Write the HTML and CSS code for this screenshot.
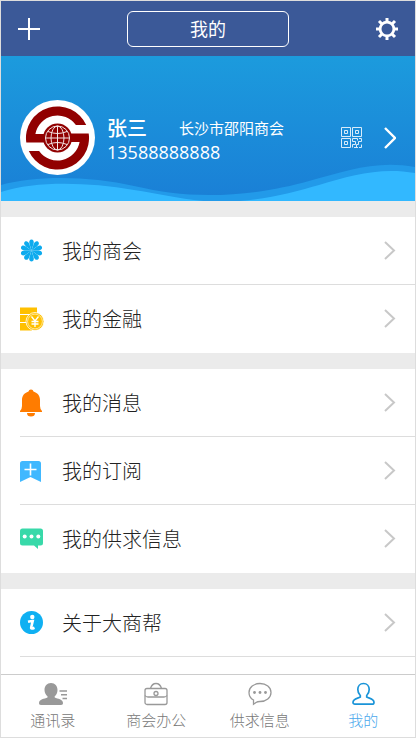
FILE: index.html
```html
<!DOCTYPE html>
<html lang="zh-CN">
	<head>
		<meta charset="utf-8">
		<meta name="viewport" content="width=device-width, initial-scale=1">
		<title>我的</title>
		<link rel="stylesheet" href="styles.css">
	</head>
	<body>
		<div class="page">
			<header class="header">
				<button type="button" class="icon-button" aria-label="添加">
					<svg width="22" height="22" viewBox="0 0 22 22"><path d="M11 0v22M0 11h22" stroke="#fff" stroke-width="2"/></svg>
				</button>
				<h1 class="title">我的</h1>
				<button type="button" class="icon-button" aria-label="设置">
					<svg width="22" height="22" viewBox="0 0 22 22" fill="none" stroke="#fff">
						<circle cx="11" cy="11" r="6.9" stroke-width="2.8"/>
						<path d="M11 0v4M11 18v4M0 11h4M18 11h4M3 3l3 3M16 16l3 3M3 19l3-3M16 6l3-3" stroke-width="3"/>
					</svg>
				</button>
			</header>

			<section class="profile">
				<svg class="wave" viewBox="0 0 414 40" preserveAspectRatio="none">
					<path fill="#229ae9" d="M0 24C35 14 90 15 133 25C160 31 180 34 208 34C245 34 280 28 308 20C345 10 375 -1 414 6V40H0z"/>
					<path fill="#32b8ff" d="M0 31C35 20 85 21 133 29C160 33 185 40 220 41C260 40 290 32 318 24C350 14 380 6 414 12V40H0z"/>
				</svg>
				<svg class="avatar" width="75" height="75" viewBox="0 0 75 75">
					<circle cx="37.5" cy="37.5" r="37.5" fill="#fff"/>
					<g fill="#910000">
						<path id="arc" d="M66.2 25A31.5 31.5 0 0 0 6.3 42.5H37V34H15.4A22.5 22.5 0 0 1 55.9 25z"/>
						<use href="#arc" transform="rotate(180 37.5 38)"/>
						<circle cx="37.5" cy="38" r="14.5"/>
					</g>
					<g fill="none" stroke="#fff" opacity=".9">
						<circle cx="37.5" cy="38" r="12"/>
						<ellipse cx="37.5" cy="38" rx="6.5" ry="12"/>
						<path d="M37.5 26v24M25.5 38h24M28 31.5q9.5 4 19 0M28 44.5q9.5-4 19 0"/>
					</g>
				</svg>
				<div class="info">
					<div class="who">
						<span class="name">张三</span>
						<span class="company">长沙市邵阳商会</span>
					</div>
					<div class="phone">13588888888</div>
				</div>
				<button type="button" class="icon-button" aria-label="二维码">
					<svg width="21" height="21" viewBox="0 0 21 21" fill="none" stroke="#d9ecfa">
						<path d="M.5.5h9v9h-9zM11.500.5h9v9h-9zM.5 11.500h9v9h-9zM3.500 3.500h3v3h-3zM14.500 3.500h3v3h-3zM3.500 14.500h3v3h-3z"/>
						<path d="M11.500 20.500v-3h3v-3h-3v-3h5v2M18 11.500h2.500v3h-3v3h-2v3M18 20.500h2.500v-3M13 20.500h4"/>
					</svg>
				</button>
				<a href="#" class="more" aria-label="个人资料">
					<svg width="12" height="22" viewBox="0 0 12 22"><path d="M1 1l10 10L1 21" fill="none" stroke="#fff" stroke-width="2.4"/></svg>
				</a>
			</section>

			<nav class="group">
				<a href="#" class="row">
					<svg class="icon" viewBox="0 0 24 24" fill="#0dabee">
						<path id="petal" d="M11.500 11.500L9.500 5C8.600 2 9.900.5 11.500.5s2.900 1.500 2 4.500z"/>
						<use href="#petal" transform="rotate(36 11.5 11.5)"/>
						<use href="#petal" transform="rotate(72 11.5 11.5)"/>
						<use href="#petal" transform="rotate(108 11.5 11.5)"/>
						<use href="#petal" transform="rotate(144 11.5 11.5)"/>
						<use href="#petal" transform="rotate(180 11.5 11.5)"/>
						<use href="#petal" transform="rotate(216 11.5 11.5)"/>
						<use href="#petal" transform="rotate(252 11.5 11.5)"/>
						<use href="#petal" transform="rotate(288 11.5 11.5)"/>
						<use href="#petal" transform="rotate(324 11.5 11.5)"/>
					</svg>
					<span class="text">我的商会</span>
					<svg class="arrow" viewBox="0 0 12 19"><path d="M1 1l9 8.500L1 18"/></svg>
				</a>
				<a href="#" class="row">
					<svg class="icon" viewBox="0 0 24 24">
						<path fill="#ffc000" d="M0 .5h17V7H0zM0 8h12v7H0zM0 16h12v7.500H0z"/>
						<circle cx="15" cy="14.5" r="9" fill="#ffc000" stroke="#fff" stroke-width=".8"/>
						<circle cx="15" cy="14.5" r="7.400" fill="none" stroke="#fff" stroke-width=".6"/>
						<path fill="none" stroke="#fff" stroke-width="1.300" d="M11.500 9.500l3.500 4.500 3.500-4.500M15 14v6M11.500 14.500h7M11.500 17h7"/>
					</svg>
					<span class="text">我的金融</span>
					<svg class="arrow" viewBox="0 0 12 19"><path d="M1 1l9 8.500L1 18"/></svg>
				</a>
			</nav>

			<nav class="group">
				<a href="#" class="row">
					<svg class="icon bell" viewBox="0 0 24 28" fill="#ff7c00">
						<path d="M11 .5a2.500 2.500 0 0 1 2.500 2C18 4 20 7 20 11v6q0 3 2 5v1H0v-1q2-2 2-5v-6C2 7 4 4 8.500 2.500A2.500 2.500 0 0 1 11 .5zM7 24h8a4 3.500 0 0 1-8 0z"/>
					</svg>
					<span class="text">我的消息</span>
					<svg class="arrow" viewBox="0 0 12 19"><path d="M1 1l9 8.500L1 18"/></svg>
				</a>
				<a href="#" class="row">
					<svg class="icon" viewBox="0 0 24 24">
						<path fill="#40b8ff" d="M2.500 2h16a2.500 2.500 0 0 1 2.500 2.500V23l-10.500-5L0 23V4.500A2.500 2.500 0 0 1 2.500 2z"/>
						<path stroke="#fff" stroke-width="1.600" d="M10.500 4.500v12M4.500 10.500h12"/>
					</svg>
					<span class="text">我的订阅</span>
					<svg class="arrow" viewBox="0 0 12 19"><path d="M1 1l9 8.500L1 18"/></svg>
				</a>
				<a href="#" class="row">
					<svg class="icon" viewBox="0 0 24 24">
						<path fill="#38d9a9" d="M2.500 1.500h18A2.500 2.500 0 0 1 23 4v12a2.500 2.500 0 0 1-2.500 2.500H18V22l-4-3.500H2.500A2.500 2.500 0 0 1 0 16V4a2.500 2.500 0 0 1 2.500-2.500z"/>
						<g fill="#fff"><circle cx="4.700" cy="9.500" r="2"/><circle cx="11.500" cy="9.500" r="2"/><circle cx="18.300" cy="9.500" r="2"/></g>
					</svg>
					<span class="text">我的供求信息</span>
					<svg class="arrow" viewBox="0 0 12 19"><path d="M1 1l9 8.500L1 18"/></svg>
				</a>
			</nav>

			<nav class="group about">
				<a href="#" class="row">
					<svg class="icon" viewBox="0 0 24 24">
						<circle cx="11.5" cy="11.5" r="11.5" fill="#0fb0f2"/>
						<circle cx="12.300" cy="6" r="2.200" fill="#fff"/>
						<path d="M8 10.700q3-.7 4.700-.7l-1.500 6.500q-.4 1.800 3.300.2" fill="none" stroke="#fff" stroke-width="2.600"/>
					</svg>
					<span class="text">关于大商帮</span>
					<svg class="arrow" viewBox="0 0 12 19"><path d="M1 1l9 8.500L1 18"/></svg>
				</a>
			</nav>

			<nav class="tabs">
				<a href="#" class="tab">
					<svg width="30" height="24" viewBox="0 0 30 24">
						<path fill="#999" d="M13 1c4 0 6.500 3 6.500 7 0 3-1.200 5-2.800 6.300v1.200c3 1.500 8.300 1.500 8.300 5.500 0 1-.5 2-2 2H3c-1.500 0-2-1-2-2 0-4 5.500-4 8.500-5.500v-1.200C8 13 6.500 11 6.500 8c0-4 2.500-7 6.500-7z"/>
						<path stroke="#999" stroke-width="1.500" d="M21.500 9H29M23 12.700h6M24.500 16.500H29"/>
					</svg>
					<span>通讯录</span>
				</a>
				<a href="#" class="tab">
					<svg width="24" height="24" viewBox="0 0 24 24" fill="none" stroke="#999" stroke-width="1.300">
						<rect x="1" y="6.500" width="22" height="16" rx="2"/>
						<path d="M6.500 6.500C7.500 3 9 1.500 12 1.500s4.500 1.500 5.500 5M1 13.500q1 1.500 3 1.500h16q2 0 3-1.500"/>
						<circle cx="12" cy="11.500" r="2"/>
					</svg>
					<span>商会办公</span>
				</a>
				<a href="#" class="tab">
					<svg width="24" height="24" viewBox="0 0 24 24" fill="none" stroke="#999" stroke-width="1.300">
						<path d="M12 1.500c6.200 0 11 3.900 11 9s-4.800 9-11 9c-1.700 0-3 .3-4 1L5.500 22.300V18C2.600 16.500 1 13.700 1 10.500c0-5.100 4.800-9 11-9z"/>
						<g fill="#999" stroke="none"><circle cx="6.500" cy="10.500" r="1.400"/><circle cx="12" cy="10.500" r="1.400"/><circle cx="17.500" cy="10.500" r="1.400"/></g>
					</svg>
					<span>供求信息</span>
				</a>
				<a href="#" class="tab active">
					<svg width="24" height="24" viewBox="0 0 24 24" fill="none" stroke="#1a94d8" stroke-width="1.700">
						<path d="M12.500 1.500c3.500 0 5.700 2.600 5.700 6 0 2.700-1 4.500-2.500 6v1.500c2.500 1.600 7.300 1.500 7.300 5.500 0 1-.7 1.700-2 1.700h-17c-1.300 0-2-.7-2-1.700 0-4 4.800-3.900 7.300-5.500v-1.500c-1.500-1.500-2.500-3.300-2.500-6 0-3.400 2.200-6 5.700-6z"/>
					</svg>
					<span>我的</span>
				</a>
			</nav>
		</div>
	</body>
</html>
```

FILE: styles.css
```css
* {
	box-sizing: border-box;
}
body {
	margin: 0;
	font-family: "Noto Sans CJK SC", sans-serif;
	font-weight: 300;
	color: #222;
	background: #fff;
}
a {
	color: inherit;
	text-decoration: none;
}
svg {
	display: block;
	flex: none;
}
.page {
	display: flex;
	flex-direction: column;
	min-height: 100vh;
	border: 1px solid #ddd;
}

.header {
	display: flex;
	align-items: center;
	justify-content: space-between;
	height: 55px;
	padding: 0 17px;
	background: #3b5998;
}
.title {
	width: 162px;
	height: 36px;
	margin: 0;
	border: 1px solid #fff;
	border-radius: 6px;
	font-size: 18px;
	font-weight: 400;
	line-height: 32px;
	text-align: center;
	color: #fff;
}
.icon-button {
	padding: 0;
	border: 0;
	background: none;
	cursor: pointer;
}

.profile {
	position: relative;
	display: flex;
	align-items: center;
	height: 145px;
	padding: 24px 19px 6px;
	color: #fff;
	background: linear-gradient(#1c9bdd, #1a7fd6);
}
.wave {
	position: absolute;
	left: 0;
	bottom: 0;
	width: 100%;
	height: 40px;
}
.avatar {
	position: relative;
}
.info {
	flex: 1;
	padding: 4px 0 0 12px;
}
.who {
	display: flex;
	align-items: center;
	gap: 32px;
	line-height: 24px;
}
.name {
	font-size: 20px;
	font-weight: 500;
}
.company {
	font-size: 15px;
	font-weight: 400;
}
.phone {
	font-family: "Open Sans", sans-serif;
	font-size: 18px;
	font-weight: 400;
	line-height: 24px;
}
.more {
	margin-left: 22px;
}

.group {
	padding-left: 19px;
	border-top: 16px solid #ebebeb;
}
.row {
	display: flex;
	align-items: center;
	height: 68px;
	padding-right: 19px;
	border-bottom: 1px solid #ddd;
}
.row:last-child {
	border-bottom-color: transparent;
}
.about .row:last-child {
	border-bottom-color: #ddd;
}
.icon {
	width: 24px;
	height: 24px;
}
.bell {
	height: 28px;
}
.text {
	flex: 1;
	padding-left: 18px;
	font-size: 20px;
}
.arrow {
	width: 12px;
	height: 19px;
	fill: none;
	stroke: #c8c8c8;
	stroke-width: 2;
}

.tabs {
	display: flex;
	height: 63px;
	margin-top: auto;
	border-top: 1px solid #ccc;
}
.tab {
	flex: 1;
	display: flex;
	flex-direction: column;
	align-items: center;
	gap: 2px;
	padding-top: 7px;
	font-size: 15px;
	line-height: 24px;
	color: #777;
}
.active {
	color: #4aa8ec;
}
```
